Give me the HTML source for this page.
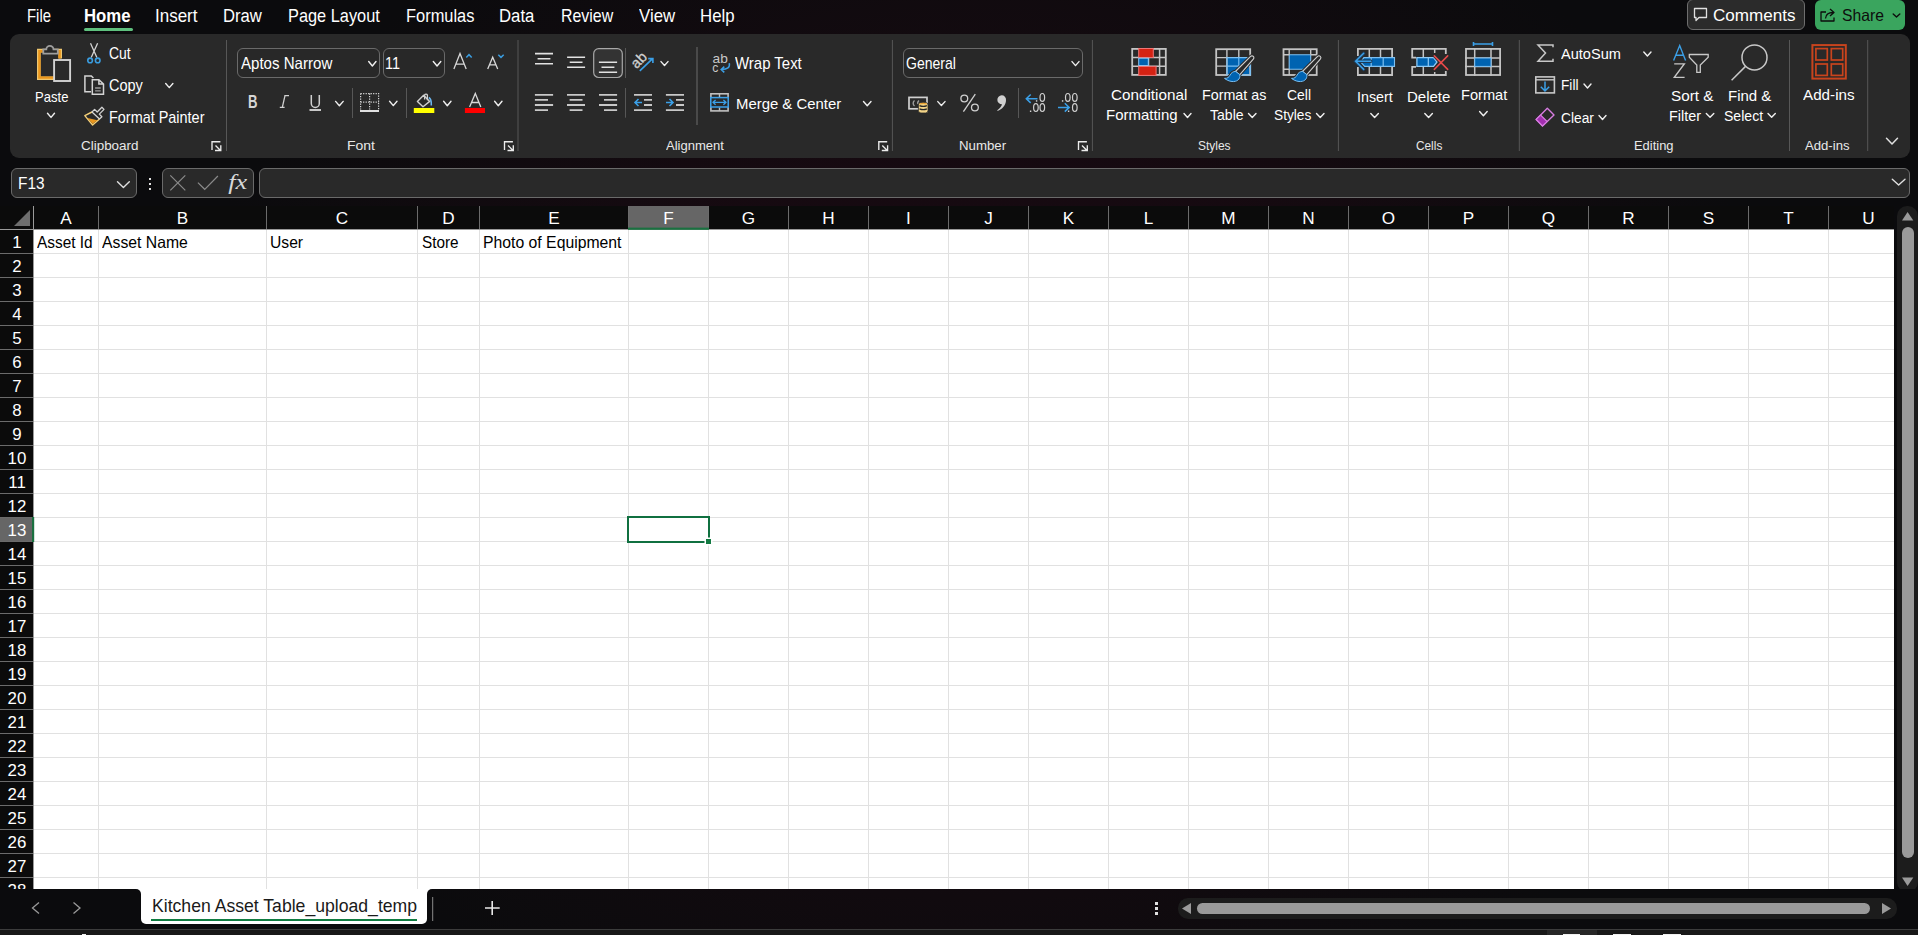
<!DOCTYPE html>
<html><head><meta charset="utf-8"><style>
html,body{margin:0;padding:0;width:1918px;height:935px;overflow:hidden;background:#0b0b0d;}
body{position:relative;font-family:"Liberation Sans",sans-serif;
background:var(--bgd);}
:root{--bgd:radial-gradient(ellipse 820px 620px at 980px 450px, #170a11 0%, rgba(23,10,17,0.9) 50%, rgba(11,11,13,0) 100%) fixed, #0b0b0d;}
.t{position:absolute;white-space:pre;line-height:1;transform-origin:0 0;}
svg{position:absolute;left:0;top:0;}
</style></head><body>
<div style="position:absolute;left:84px;top:28px;width:49px;height:2.6px;background:#5fc07e;border-radius:2px;"></div><div style="position:absolute;left:1687px;top:-1px;width:118px;height:31px;background:#2b2b2b;border:1px solid #6e6e6e;border-radius:6px;box-sizing:border-box;"></div><div style="position:absolute;left:1815px;top:0px;width:90px;height:29.5px;background:#3aa55e;border-radius:6px;"></div><div style="position:absolute;left:10px;top:34px;width:1900px;height:123.5px;background:#292929;border-radius:9px;"></div><div style="position:absolute;left:237px;top:48px;width:142.5px;height:29.5px;background:#282828;border:1px solid #6a6a6a;border-radius:6px;box-sizing:border-box;"></div><div style="position:absolute;left:382.5px;top:48px;width:62px;height:29.5px;background:#282828;border:1px solid #6a6a6a;border-radius:6px;box-sizing:border-box;"></div><div style="position:absolute;left:903px;top:48px;width:180px;height:30px;background:#282828;border:1px solid #6a6a6a;border-radius:6px;box-sizing:border-box;"></div><div style="position:absolute;left:11px;top:168px;width:125.5px;height:30px;background:#292929;border:1px solid #6a6a6a;border-radius:6px;box-sizing:border-box;"></div><div style="position:absolute;left:148.5px;top:177.5px;width:2.5px;height:2.5px;background:#e0e0e0;"></div><div style="position:absolute;left:148.5px;top:182.5px;width:2.5px;height:2.5px;background:#e0e0e0;"></div><div style="position:absolute;left:148.5px;top:187.5px;width:2.5px;height:2.5px;background:#e0e0e0;"></div><div style="position:absolute;left:162px;top:168px;width:91.5px;height:30px;background:#292929;border:1px solid #6a6a6a;border-radius:6px;box-sizing:border-box;"></div><div style="position:absolute;left:259px;top:168px;width:1651px;height:30px;background:#292929;border:1px solid #6a6a6a;border-radius:6px;box-sizing:border-box;"></div><div style="position:absolute;left:0px;top:206px;width:1894px;height:683px;background:#0b0b0b;"></div><div style="position:absolute;left:34px;top:230px;width:1860px;height:659px;background:#ffffff;"></div><div style="position:absolute;left:628px;top:206px;width:81px;height:23px;background:#666666;"></div><div style="position:absolute;left:0px;top:517px;width:33px;height:25px;background:#666666;"></div><div style="position:absolute;left:1897px;top:206px;width:21px;height:686px;background:#1c1c1c;border-radius:10px;"></div><div style="position:absolute;left:1902px;top:227px;width:11.5px;height:631px;background:#9a9a9a;border-radius:6px;"></div><div style="position:absolute;left:0px;top:889px;width:1918px;height:40px;background:var(--bgd);background-attachment:fixed;"></div><div style="position:absolute;left:130px;top:884px;width:310px;height:12px;background:#ffffff;"></div><div style="position:absolute;left:0px;top:889px;width:141px;height:40px;background:var(--bgd);background-attachment:fixed;border-top-right-radius:5px;"></div><div style="position:absolute;left:427px;top:889px;width:1491px;height:40px;background:var(--bgd);background-attachment:fixed;border-top-left-radius:5px;"></div><div style="position:absolute;left:141px;top:885px;width:286px;height:39px;background:#ffffff;border-radius:0 0 5px 5px;"></div><div style="position:absolute;left:151px;top:918.9px;width:266px;height:2.2px;background:#107c41;"></div><div style="position:absolute;left:1155px;top:902px;width:2.5px;height:2.5px;background:#e0e0e0;"></div><div style="position:absolute;left:1155px;top:907px;width:2.5px;height:2.5px;background:#e0e0e0;"></div><div style="position:absolute;left:1155px;top:912px;width:2.5px;height:2.5px;background:#e0e0e0;"></div><div style="position:absolute;left:1178px;top:898px;width:719px;height:20.5px;background:#1c1c1c;border-radius:10px;"></div><div style="position:absolute;left:1197px;top:903px;width:673px;height:11px;background:#9a9a9a;border-radius:6px;"></div><div style="position:absolute;left:0px;top:929px;width:1918px;height:6px;background:#181818;border-top:1px solid #3c3c3c;box-sizing:border-box;"></div><div style="position:absolute;left:1547px;top:930px;width:50px;height:5px;background:#262626;"></div><div style="position:absolute;left:1562.8px;top:933.6px;width:17.200000000000045px;height:1.4px;background:#f0f0f0;"></div><div style="position:absolute;left:1612.8px;top:933.6px;width:18.200000000000045px;height:1.4px;background:#f0f0f0;"></div><div style="position:absolute;left:1662.9px;top:933.6px;width:18.09999999999991px;height:1.4px;background:#f0f0f0;"></div><div style="position:absolute;left:82px;top:933.5px;width:4px;height:1.5px;background:#f0f0f0;"></div>
<svg width="1918" height="935" viewBox="0 0 1918 935"><line x1="226.5" y1="40" x2="226.5" y2="151" stroke="#575757" stroke-width="1"/><line x1="518" y1="40" x2="518" y2="151" stroke="#575757" stroke-width="1"/><line x1="697" y1="47" x2="697" y2="125" stroke="#575757" stroke-width="1"/><line x1="892.4" y1="40" x2="892.4" y2="151" stroke="#575757" stroke-width="1"/><line x1="1092.4" y1="40" x2="1092.4" y2="151" stroke="#575757" stroke-width="1"/><line x1="1338.4" y1="40" x2="1338.4" y2="151" stroke="#575757" stroke-width="1"/><line x1="1519.3" y1="40" x2="1519.3" y2="151" stroke="#575757" stroke-width="1"/><line x1="1789.5" y1="40" x2="1789.5" y2="151" stroke="#575757" stroke-width="1"/><line x1="1867.7" y1="40" x2="1867.7" y2="151" stroke="#575757" stroke-width="1"/><g stroke="#ececec" fill="none" stroke-width="1.35"><path d="M212.0 150 V141.7 H220.4"/><path d="M215.5 145.4 L220.5 150.4 M215.0 150.5 H220.8 V145.2"/></g><g stroke="#ececec" fill="none" stroke-width="1.35"><path d="M504.5 150 V141.7 H512.9"/><path d="M508 145.4 L513 150.4 M507.5 150.5 H513.3 V145.2"/></g><g stroke="#ececec" fill="none" stroke-width="1.35"><path d="M878.8 150 V141.7 H887.1999999999999"/><path d="M882.3 145.4 L887.3 150.4 M881.8 150.5 H887.5999999999999 V145.2"/></g><g stroke="#ececec" fill="none" stroke-width="1.35"><path d="M1078.5 150 V141.7 H1086.9"/><path d="M1082 145.4 L1087 150.4 M1081.5 150.5 H1087.3 V145.2"/></g><line x1="98.5" y1="230" x2="98.5" y2="889" stroke="#e1e1e1"/><line x1="98.5" y1="206" x2="98.5" y2="229" stroke="#6b6b6b"/><line x1="266.5" y1="230" x2="266.5" y2="889" stroke="#e1e1e1"/><line x1="266.5" y1="206" x2="266.5" y2="229" stroke="#6b6b6b"/><line x1="417.5" y1="230" x2="417.5" y2="889" stroke="#e1e1e1"/><line x1="417.5" y1="206" x2="417.5" y2="229" stroke="#6b6b6b"/><line x1="479.5" y1="230" x2="479.5" y2="889" stroke="#e1e1e1"/><line x1="479.5" y1="206" x2="479.5" y2="229" stroke="#6b6b6b"/><line x1="628.5" y1="230" x2="628.5" y2="889" stroke="#e1e1e1"/><line x1="628.5" y1="206" x2="628.5" y2="229" stroke="#6b6b6b"/><line x1="708.5" y1="230" x2="708.5" y2="889" stroke="#e1e1e1"/><line x1="708.5" y1="206" x2="708.5" y2="229" stroke="#6b6b6b"/><line x1="788.5" y1="230" x2="788.5" y2="889" stroke="#e1e1e1"/><line x1="788.5" y1="206" x2="788.5" y2="229" stroke="#6b6b6b"/><line x1="868.5" y1="230" x2="868.5" y2="889" stroke="#e1e1e1"/><line x1="868.5" y1="206" x2="868.5" y2="229" stroke="#6b6b6b"/><line x1="948.5" y1="230" x2="948.5" y2="889" stroke="#e1e1e1"/><line x1="948.5" y1="206" x2="948.5" y2="229" stroke="#6b6b6b"/><line x1="1028.5" y1="230" x2="1028.5" y2="889" stroke="#e1e1e1"/><line x1="1028.5" y1="206" x2="1028.5" y2="229" stroke="#6b6b6b"/><line x1="1108.5" y1="230" x2="1108.5" y2="889" stroke="#e1e1e1"/><line x1="1108.5" y1="206" x2="1108.5" y2="229" stroke="#6b6b6b"/><line x1="1188.5" y1="230" x2="1188.5" y2="889" stroke="#e1e1e1"/><line x1="1188.5" y1="206" x2="1188.5" y2="229" stroke="#6b6b6b"/><line x1="1268.5" y1="230" x2="1268.5" y2="889" stroke="#e1e1e1"/><line x1="1268.5" y1="206" x2="1268.5" y2="229" stroke="#6b6b6b"/><line x1="1348.5" y1="230" x2="1348.5" y2="889" stroke="#e1e1e1"/><line x1="1348.5" y1="206" x2="1348.5" y2="229" stroke="#6b6b6b"/><line x1="1428.5" y1="230" x2="1428.5" y2="889" stroke="#e1e1e1"/><line x1="1428.5" y1="206" x2="1428.5" y2="229" stroke="#6b6b6b"/><line x1="1508.5" y1="230" x2="1508.5" y2="889" stroke="#e1e1e1"/><line x1="1508.5" y1="206" x2="1508.5" y2="229" stroke="#6b6b6b"/><line x1="1588.5" y1="230" x2="1588.5" y2="889" stroke="#e1e1e1"/><line x1="1588.5" y1="206" x2="1588.5" y2="229" stroke="#6b6b6b"/><line x1="1668.5" y1="230" x2="1668.5" y2="889" stroke="#e1e1e1"/><line x1="1668.5" y1="206" x2="1668.5" y2="229" stroke="#6b6b6b"/><line x1="1748.5" y1="230" x2="1748.5" y2="889" stroke="#e1e1e1"/><line x1="1748.5" y1="206" x2="1748.5" y2="229" stroke="#6b6b6b"/><line x1="1828.5" y1="230" x2="1828.5" y2="889" stroke="#e1e1e1"/><line x1="1828.5" y1="206" x2="1828.5" y2="229" stroke="#6b6b6b"/><line x1="34" y1="253.5" x2="1894" y2="253.5" stroke="#e1e1e1"/><line x1="0" y1="253.5" x2="33" y2="253.5" stroke="#6b6b6b"/><line x1="34" y1="277.5" x2="1894" y2="277.5" stroke="#e1e1e1"/><line x1="0" y1="277.5" x2="33" y2="277.5" stroke="#6b6b6b"/><line x1="34" y1="301.5" x2="1894" y2="301.5" stroke="#e1e1e1"/><line x1="0" y1="301.5" x2="33" y2="301.5" stroke="#6b6b6b"/><line x1="34" y1="325.5" x2="1894" y2="325.5" stroke="#e1e1e1"/><line x1="0" y1="325.5" x2="33" y2="325.5" stroke="#6b6b6b"/><line x1="34" y1="349.5" x2="1894" y2="349.5" stroke="#e1e1e1"/><line x1="0" y1="349.5" x2="33" y2="349.5" stroke="#6b6b6b"/><line x1="34" y1="373.5" x2="1894" y2="373.5" stroke="#e1e1e1"/><line x1="0" y1="373.5" x2="33" y2="373.5" stroke="#6b6b6b"/><line x1="34" y1="397.5" x2="1894" y2="397.5" stroke="#e1e1e1"/><line x1="0" y1="397.5" x2="33" y2="397.5" stroke="#6b6b6b"/><line x1="34" y1="421.5" x2="1894" y2="421.5" stroke="#e1e1e1"/><line x1="0" y1="421.5" x2="33" y2="421.5" stroke="#6b6b6b"/><line x1="34" y1="445.5" x2="1894" y2="445.5" stroke="#e1e1e1"/><line x1="0" y1="445.5" x2="33" y2="445.5" stroke="#6b6b6b"/><line x1="34" y1="469.5" x2="1894" y2="469.5" stroke="#e1e1e1"/><line x1="0" y1="469.5" x2="33" y2="469.5" stroke="#6b6b6b"/><line x1="34" y1="493.5" x2="1894" y2="493.5" stroke="#e1e1e1"/><line x1="0" y1="493.5" x2="33" y2="493.5" stroke="#6b6b6b"/><line x1="34" y1="517.5" x2="1894" y2="517.5" stroke="#e1e1e1"/><line x1="0" y1="517.5" x2="33" y2="517.5" stroke="#6b6b6b"/><line x1="34" y1="541.5" x2="1894" y2="541.5" stroke="#e1e1e1"/><line x1="0" y1="541.5" x2="33" y2="541.5" stroke="#6b6b6b"/><line x1="34" y1="565.5" x2="1894" y2="565.5" stroke="#e1e1e1"/><line x1="0" y1="565.5" x2="33" y2="565.5" stroke="#6b6b6b"/><line x1="34" y1="589.5" x2="1894" y2="589.5" stroke="#e1e1e1"/><line x1="0" y1="589.5" x2="33" y2="589.5" stroke="#6b6b6b"/><line x1="34" y1="613.5" x2="1894" y2="613.5" stroke="#e1e1e1"/><line x1="0" y1="613.5" x2="33" y2="613.5" stroke="#6b6b6b"/><line x1="34" y1="637.5" x2="1894" y2="637.5" stroke="#e1e1e1"/><line x1="0" y1="637.5" x2="33" y2="637.5" stroke="#6b6b6b"/><line x1="34" y1="661.5" x2="1894" y2="661.5" stroke="#e1e1e1"/><line x1="0" y1="661.5" x2="33" y2="661.5" stroke="#6b6b6b"/><line x1="34" y1="685.5" x2="1894" y2="685.5" stroke="#e1e1e1"/><line x1="0" y1="685.5" x2="33" y2="685.5" stroke="#6b6b6b"/><line x1="34" y1="709.5" x2="1894" y2="709.5" stroke="#e1e1e1"/><line x1="0" y1="709.5" x2="33" y2="709.5" stroke="#6b6b6b"/><line x1="34" y1="733.5" x2="1894" y2="733.5" stroke="#e1e1e1"/><line x1="0" y1="733.5" x2="33" y2="733.5" stroke="#6b6b6b"/><line x1="34" y1="757.5" x2="1894" y2="757.5" stroke="#e1e1e1"/><line x1="0" y1="757.5" x2="33" y2="757.5" stroke="#6b6b6b"/><line x1="34" y1="781.5" x2="1894" y2="781.5" stroke="#e1e1e1"/><line x1="0" y1="781.5" x2="33" y2="781.5" stroke="#6b6b6b"/><line x1="34" y1="805.5" x2="1894" y2="805.5" stroke="#e1e1e1"/><line x1="0" y1="805.5" x2="33" y2="805.5" stroke="#6b6b6b"/><line x1="34" y1="829.5" x2="1894" y2="829.5" stroke="#e1e1e1"/><line x1="0" y1="829.5" x2="33" y2="829.5" stroke="#6b6b6b"/><line x1="34" y1="853.5" x2="1894" y2="853.5" stroke="#e1e1e1"/><line x1="0" y1="853.5" x2="33" y2="853.5" stroke="#6b6b6b"/><line x1="34" y1="877.5" x2="1894" y2="877.5" stroke="#e1e1e1"/><line x1="0" y1="877.5" x2="33" y2="877.5" stroke="#6b6b6b"/><line x1="0" y1="229.5" x2="1894" y2="229.5" stroke="#9a9a9a"/><line x1="33.5" y1="206" x2="33.5" y2="889" stroke="#9a9a9a"/><rect x="628" y="227.6" width="81" height="2.2" fill="#1a7040"/><rect x="32" y="517" width="2.2" height="25" fill="#1a7040"/><path d="M14 226 L30 210 L30 226 Z" fill="#6e6e6e"/><rect x="628" y="517" width="81" height="25" fill="none" stroke="#107040" stroke-width="2"/><rect x="704.5" y="537.5" width="8" height="8" fill="#ffffff"/><rect x="706" y="539" width="5" height="5" fill="#137a42"/><path d="M1902 220.5 L1913.3 220.5 L1907.6 212 Z" fill="#9a9a9a"/><path d="M1902 877.5 L1913.3 877.5 L1907.6 886 Z" fill="#9a9a9a"/><path d="M39 902.5 L32.5 908 L39 913.5" fill="none" stroke="#9a9a9a" stroke-width="1.3"/><path d="M73.5 902.5 L80 908 L73.5 913.5" fill="none" stroke="#9a9a9a" stroke-width="1.3"/><line x1="432.7" y1="897" x2="432.7" y2="921" stroke="#8a8a8a" stroke-width="1"/><path d="M492.2 901 V915 M485 908 H499.7" stroke="#e8e8e8" stroke-width="1.6"/><path d="M1191 903 L1191 914 L1182 908.5 Z" fill="#9a9a9a"/><path d="M1882 903 L1882 914 L1891 908.5 Z" fill="#9a9a9a"/><path d="M60.2 58.5 V50.6 H38.8 V78.2 H54" fill="none" stroke="#f0c870" stroke-width="3.6"/><path d="M59.6 58.5 V51.2 H39.4 V77.6 H54" fill="none" stroke="#ea961c" stroke-width="2.4"/><path d="M43.3 53.6 V49.4 H46.3 A3.6 3.6 0 0 1 53.5 49.4 H57.8 V53.6 Z" fill="#292929" stroke="#9e9e9e" stroke-width="1.8"/><rect x="54.1" y="60" width="16" height="21" fill="#292929" stroke="#d2d2d2" stroke-width="1.9"/><path d="M47.5 113.2 L51.0 117.4 L54.5 113.2" fill="none" stroke="#f0f0f0" stroke-width="1.4" stroke-linecap="round" stroke-linejoin="round"/><path d="M90.5 43.3 L96.9 57.6 M97.6 43.3 L91.2 57.6" stroke="#d4d4d4" stroke-width="1.3" fill="none"/><circle cx="90.1" cy="60.4" r="2.3" fill="none" stroke="#3a9de0" stroke-width="1.6"/><circle cx="97.7" cy="60.4" r="2.3" fill="none" stroke="#3a9de0" stroke-width="1.6"/><path d="M91 91.8 H84.9 V75.9 H91.3 L93.4 78" fill="none" stroke="#d4d4d4" stroke-width="1.5"/><path d="M92.3 79.8 H98.9 L103.5 84 V94.3 H92.3 Z M98.9 79.8 V84 H103.5" fill="#292929" stroke="#d4d4d4" stroke-width="1.5"/><path d="M95.1 88 H100.7 M95.1 90.8 H100.7" stroke="#9c9c9c" stroke-width="1.3"/><path d="M165.7 83.5 L169.3 87.6 L172.9 83.5" fill="none" stroke="#f0f0f0" stroke-width="1.4" stroke-linecap="round" stroke-linejoin="round"/><path d="M92 112 L84.8 115.6 L92.6 125 L99.5 118.9" fill="none" stroke="#f3cf78" stroke-width="1.4" stroke-linejoin="round"/><path d="M87.5 118 L97.5 120.3 L92.6 123.8 Z" fill="#e8961e"/><path d="M92 112 L94.6 109.4 L97.2 112 L101.9 107.3 L104 109.4 L99.3 114.1 L101.9 116.7 L99.5 118.9 Z" fill="none" stroke="#d4d4d4" stroke-width="1.3" stroke-linejoin="round"/><path d="M368.7 61.5 L372.35 66 L376 61.5" fill="none" stroke="#f0f0f0" stroke-width="1.4" stroke-linecap="round" stroke-linejoin="round"/><path d="M433.3 61.5 L437.05 66 L440.8 61.5" fill="none" stroke="#f0f0f0" stroke-width="1.4" stroke-linecap="round" stroke-linejoin="round"/><path d="M453.9 68.9 L460 53.6 L466.2 68.9 M456 64.2 H464" fill="none" stroke="#d8d8d8" stroke-width="1.3"/><path d="M466.3 57.5 L469 54.7 L471.7 57.5" fill="none" stroke="#3a9de0" stroke-width="1.5"/><path d="M487.7 69 L492.7 57.2 L497.7 69 M489.4 64.8 H496" fill="none" stroke="#d8d8d8" stroke-width="1.3"/><path d="M498.3 54.7 L501 57.4 L503.7 54.7" fill="none" stroke="#3a9de0" stroke-width="1.5"/><path d="M284.3 95.6 H289 M285 95.6 L282.3 107.4 M279.8 107.4 H284.6" fill="none" stroke="#d0d0d0" stroke-width="1.3"/><path d="M311.3 95 V103.4 A4 4 0 0 0 319.3 103.4 V95" fill="none" stroke="#d0d0d0" stroke-width="1.5"/><rect x="309.5" y="109" width="11.5" height="2" fill="#c8c8c8"/><path d="M335.6 101.4 L339.4 105.8 L343.2 101.4" fill="none" stroke="#f0f0f0" stroke-width="1.4" stroke-linecap="round" stroke-linejoin="round"/><line x1="352.5" y1="88" x2="352.5" y2="118" stroke="#575757"/><g fill="none" stroke="#d8d8d8" stroke-width="1.2" stroke-dasharray="1.2 1.3"><path d="M360.6 93.6 H378.6 V109.4 M360.6 93.6 V109.4 M369.6 93.6 V109.4 M360.6 102.1 H378.6"/></g><rect x="360" y="110" width="19" height="2" fill="#e0e0e0"/><path d="M389.6 101.3 L393.3 105.6 L397 101.3" fill="none" stroke="#f0f0f0" stroke-width="1.4" stroke-linecap="round" stroke-linejoin="round"/><line x1="406.5" y1="88" x2="406.5" y2="118" stroke="#575757"/><path d="M424.6 99.5 V95 A1.5 1.5 0 0 1 427.4 95 V100.3" fill="none" stroke="#d0d0d0" stroke-width="1.3"/><path d="M417.4 101.5 L423.6 95.3 L429.7 101.4 L423 106.7 Z" fill="none" stroke="#d0d0d0" stroke-width="1.4" stroke-linejoin="round"/><path d="M428.8 97.5 Q431.6 99 431.3 105.5" fill="none" stroke="#6bb6ee" stroke-width="1.6"/><rect x="413.8" y="108" width="20.5" height="5" fill="#ffff00"/><path d="M443.6 101.3 L447.3 105.8 L451 101.3" fill="none" stroke="#f0f0f0" stroke-width="1.4" stroke-linecap="round" stroke-linejoin="round"/><path d="M469.6 107 L475.3 93.4 L480.8 107 M471.6 102.5 H479" fill="none" stroke="#d8d8d8" stroke-width="1.3"/><rect x="464.9" y="108" width="20.1" height="5" fill="#ff0000"/><path d="M494.6 101.3 L498.3 105.8 L502 101.3" fill="none" stroke="#f0f0f0" stroke-width="1.4" stroke-linecap="round" stroke-linejoin="round"/><rect x="593.7" y="48.7" width="28.6" height="28.8" rx="5" fill="#333333" stroke="#a8a8a8" stroke-width="1.2"/><path d="M535 53.6 H553 M537.6 58.7 H550.4 M535 63.7 H553" stroke="#e2e2e2" stroke-width="1.6"/><path d="M567.1 57.2 H585.1 M569.7 62.2 H582.5 M567.1 67.2 H585.1" stroke="#e2e2e2" stroke-width="1.6"/><path d="M598.9 62.2 H617.1 M601.5 67.3 H614.4 M598.9 72.3 H617.1" stroke="#e2e2e2" stroke-width="1.6"/><line x1="625.5" y1="48" x2="625.5" y2="78" stroke="#575757"/><g transform="translate(639.2,60.4) rotate(-45)"><text x="-8.2" y="4.4" font-family="Liberation Sans" font-size="14.5" fill="#d0d0d0" stroke="#d0d0d0" stroke-width="0.3">ab</text></g><path d="M639.8 70.9 L652.6 58.6 M648.2 58.6 H652.9 V63" fill="none" stroke="#3ba0e8" stroke-width="1.6"/><path d="M661 61.6 L664.5 65.5 L668 61.6" fill="none" stroke="#f0f0f0" stroke-width="1.4" stroke-linecap="round" stroke-linejoin="round"/><line x1="697" y1="47" x2="697" y2="125" stroke="#575757"/><path d="M534.9 94.9 H553.1 M534.9 99.9 H548 M534.9 105 H553.1 M534.9 110.1 H548" stroke="#c8c8c8" stroke-width="1.8"/><path d="M567 94.9 H585 M569.6 99.9 H582.5 M567 105 H585 M569.6 110.1 H582.5" stroke="#c8c8c8" stroke-width="1.8"/><path d="M599 94.9 H617.1 M604 99.9 H617.1 M599 105 H617.1 M604 110.1 H617.1" stroke="#c8c8c8" stroke-width="1.8"/><line x1="625.5" y1="88" x2="625.5" y2="117.7" stroke="#575757"/><path d="M634 94.9 H652 M644 99.9 H652 M644 105 H652 M634 110.1 H652" stroke="#c8c8c8" stroke-width="1.8"/><path d="M642 102.5 H635 M638.5 99 L635 102.5 L638.5 106" fill="none" stroke="#3ba0e8" stroke-width="1.6"/><path d="M665.9 94.9 H684 M676 99.9 H684 M676 105 H684 M665.9 110.1 H684" stroke="#c8c8c8" stroke-width="1.8"/><path d="M666 102.5 H673 M669.5 99 L673 102.5 L669.5 106" fill="none" stroke="#3ba0e8" stroke-width="1.6"/><text x="712.5" y="62.6" font-family="Liberation Sans" font-size="12.2" fill="#c8c8c8" textLength="15.3" lengthAdjust="spacingAndGlyphs">ab</text><text x="712.3" y="71.8" font-family="Liberation Sans" font-size="12.2" fill="#c8c8c8">c</text><path d="M729.3 63.2 Q730.5 69.5 721.5 69.5 M724.3 66.6 L721.2 69.5 L724.3 72.4" fill="none" stroke="#3ba0e8" stroke-width="1.5"/><rect x="710.9" y="93.8" width="17.2" height="17.1" fill="none" stroke="#c0c0c0" stroke-width="1.6"/><path d="M719.5 93.8 V97 M719.5 107.6 V110.9" stroke="#c0c0c0" stroke-width="1.4"/><rect x="710.8" y="97.6" width="17.4" height="9.4" fill="#292929" stroke="#3ba0e8" stroke-width="1.5"/><path d="M713 102.3 H726 M715.6 99.9 L713 102.3 L715.6 104.7 M723.4 99.9 L726 102.3 L723.4 104.7" fill="none" stroke="#3ba0e8" stroke-width="1.3"/><path d="M863.5 101.5 L867.25 105.8 L871 101.5" fill="none" stroke="#f0f0f0" stroke-width="1.4" stroke-linecap="round" stroke-linejoin="round"/><path d="M1072 61.6 L1075.5 65.6 L1079 61.6" fill="none" stroke="#f0f0f0" stroke-width="1.4" stroke-linecap="round" stroke-linejoin="round"/><rect x="909" y="97.4" width="18" height="11.4" fill="none" stroke="#d0d0d0" stroke-width="1.7"/><path d="M914.5 100.5 A3.5 3.5 0 0 0 914.5 106 M919 100.5 A3 3 0 0 0 918 104" fill="none" stroke="#a0a0a0" stroke-width="1.4"/><rect x="918.4" y="102.4" width="9.6" height="10.6" rx="2.6" fill="#f3d487" stroke="#292929" stroke-width="0.8"/><path d="M919.5 105.6 Q923.2 107.2 926.9 105.6 M919.5 108.9 Q923.2 110.5 926.9 108.9" fill="none" stroke="#292929" stroke-width="1.2"/><path d="M919.6 104 Q923.2 102.6 926.8 104" fill="none" stroke="#e8a030" stroke-width="1.2"/><path d="M937.8 101.6 L941.4 105.5 L945 101.6" fill="none" stroke="#f0f0f0" stroke-width="1.4" stroke-linecap="round" stroke-linejoin="round"/><circle cx="964.3" cy="98.5" r="3.4" fill="none" stroke="#d0d0d0" stroke-width="1.3"/><circle cx="974.9" cy="107.5" r="3.4" fill="none" stroke="#d0d0d0" stroke-width="1.3"/><path d="M975.3 94.2 L963.4 111.6" stroke="#d0d0d0" stroke-width="1.3"/><path d="M1001.7 95.3 A4.3 4.3 0 0 1 1006 100 C1006.2 105 1002 109.5 997.5 111 L997.3 110.2 C1000 108.3 1001.5 106.5 1002 104.3 A4.3 4.3 0 0 1 1001.7 95.3 Z" fill="#d0d0d0"/><line x1="1018.5" y1="88" x2="1018.5" y2="118" stroke="#575757"/><ellipse cx="1042.3" cy="97.4" rx="2.3" ry="3.9" fill="none" stroke="#d0d0d0" stroke-width="1.2"/><rect x="1035.8999999999999" y="100.2" width="1.4" height="1.5" fill="#d0d0d0"/><ellipse cx="1035.9" cy="107.6" rx="2.3" ry="3.9" fill="none" stroke="#d0d0d0" stroke-width="1.2"/><ellipse cx="1042.3" cy="107.6" rx="2.3" ry="3.9" fill="none" stroke="#d0d0d0" stroke-width="1.2"/><rect x="1029.8999999999999" y="110.5" width="1.4" height="1.5" fill="#d0d0d0"/><path d="M1037.5 98.7 H1026.5 M1030.7 94.5 L1026.3 98.7 L1030.7 102.9" fill="none" stroke="#3ba0e8" stroke-width="1.5"/><ellipse cx="1067.8" cy="97.4" rx="2.3" ry="3.9" fill="none" stroke="#d0d0d0" stroke-width="1.2"/><ellipse cx="1074.8" cy="97.4" rx="2.3" ry="3.9" fill="none" stroke="#d0d0d0" stroke-width="1.2"/><rect x="1061.8999999999999" y="100.2" width="1.4" height="1.5" fill="#d0d0d0"/><ellipse cx="1074.8" cy="107.6" rx="2.3" ry="3.9" fill="none" stroke="#d0d0d0" stroke-width="1.2"/><rect x="1067.8999999999999" y="110.5" width="1.4" height="1.5" fill="#d0d0d0"/><path d="M1058 107.4 H1069 M1064.8 103.2 L1069.2 107.4 L1064.8 111.6" fill="none" stroke="#3ba0e8" stroke-width="1.5"/><rect x="1132.2" y="48.9" width="33.6" height="26" fill="none" stroke="#c4c4c4" stroke-width="1.8"/><path d="M1159.6 48.9 V74.9 M1132.2 57.6 H1165.8 M1132.2 66.2 H1165.8 M1148.5 48.9 V74.9" stroke="#c4c4c4" stroke-width="1.5"/><rect x="1138.7" y="48.5" width="14.6" height="9" fill="#d42213" stroke="#f07575" stroke-width="1"/><rect x="1138.7" y="58.2" width="9.6" height="7.3" fill="#0063b1" stroke="#8cc8f5" stroke-width="1"/><rect x="1138.7" y="66.4" width="17.4" height="9" fill="#d42213" stroke="#f07575" stroke-width="1"/><path d="M1226.9 57.6 H1251 V75.8 H1226.9 Z" fill="#0063b1"/><rect x="1216.2" y="49.2" width="34" height="25.8" fill="none" stroke="#c4c4c4" stroke-width="1.8"/><path d="M1226.9 49.2 V57.6 M1238.8 49.2 V57.6 M1216.2 57.6 H1226.9 M1216.2 66.1 H1226.9 M1226.9 57.6 V75 " stroke="#c4c4c4" stroke-width="1.4"/><path d="M1226.9 57.6 H1250.5 V75 H1226.9 Z M1238.8 57.6 V75 M1226.9 66.1 H1250.5" fill="none" stroke="#7cc0f2" stroke-width="1.1"/><path d="M1235.4 71.5 L1250.6 56.4 A1.9 1.9 0 0 1 1253.3 59.1 L1239.6 74.9 Z" fill="#292929" stroke="#292929" stroke-width="3"/><path d="M1239.8 74.6 C1240.6 79.5 1236.5 82 1232 81.5 C1229 81.2 1226.3 79.8 1224.5 78.4 C1227.5 78.5 1229 77.2 1230 75.2 C1231 72.8 1233.3 71.4 1235.6 71.4 Z" fill="#292929" stroke="#292929" stroke-width="2.6"/><path d="M1235.4 71.5 L1250.6 56.4 A1.9 1.9 0 0 1 1253.3 59.1 L1239.6 74.9 Z" fill="#292929" stroke="#cfcfcf" stroke-width="1.1" stroke-linejoin="round"/><path d="M1239.8 74.6 C1240.6 79.5 1236.5 82 1232 81.5 C1229 81.2 1226.3 79.8 1224.5 78.4 C1227.5 78.5 1229 77.2 1230 75.2 C1231 72.8 1233.3 71.4 1235.6 71.4 Z" fill="#0063b1" stroke="#78bdf0" stroke-width="1"/><path d="M1289.2 54.8 H1310.7 V69.2 H1289.2 Z" fill="#0063b1" stroke="#7cc0f2" stroke-width="1.1"/><rect x="1283.5" y="49.2" width="33.2" height="25.8" fill="none" stroke="#c4c4c4" stroke-width="1.8"/><path d="M1289.2 49.2 V54.8 M1310.7 49.2 V54.8 M1283.5 54.8 H1289.2 M1310.7 54.8 H1316.7 M1283.5 69.2 H1289.2 M1289.2 69.2 V75" stroke="#c4c4c4" stroke-width="1.4"/><path d="M1302.4 71.5 L1317.6 56.4 A1.9 1.9 0 0 1 1320.3 59.1 L1306.6 74.9 Z" fill="#292929" stroke="#292929" stroke-width="3"/><path d="M1306.8 74.6 C1307.6 79.5 1303.5 82 1299 81.5 C1296 81.2 1293.3 79.8 1291.5 78.4 C1294.5 78.5 1296 77.2 1297 75.2 C1298 72.8 1300.3 71.4 1302.6 71.4 Z" fill="#292929" stroke="#292929" stroke-width="2.6"/><path d="M1302.4 71.5 L1317.6 56.4 A1.9 1.9 0 0 1 1320.3 59.1 L1306.6 74.9 Z" fill="#292929" stroke="#cfcfcf" stroke-width="1.1" stroke-linejoin="round"/><path d="M1306.8 74.6 C1307.6 79.5 1303.5 82 1299 81.5 C1296 81.2 1293.3 79.8 1291.5 78.4 C1294.5 78.5 1296 77.2 1297 75.2 C1298 72.8 1300.3 71.4 1302.6 71.4 Z" fill="#0063b1" stroke="#78bdf0" stroke-width="1"/><path d="M1184 113.5 L1187.5 117.5 L1191 113.5" fill="none" stroke="#f0f0f0" stroke-width="1.4" stroke-linecap="round" stroke-linejoin="round"/><path d="M1248.5 113.5 L1252.25 117.5 L1256 113.5" fill="none" stroke="#f0f0f0" stroke-width="1.4" stroke-linecap="round" stroke-linejoin="round"/><path d="M1316.5 113.5 L1320.25 117.5 L1324 113.5" fill="none" stroke="#f0f0f0" stroke-width="1.4" stroke-linecap="round" stroke-linejoin="round"/><path d="M1357.9 56 V48.9 H1392.1 V75 H1357.9 V67" fill="none" stroke="#c4c4c4" stroke-width="1.8"/><path d="M1369.3 48 V57 M1380.5 48 V57 M1369.3 67 V75.9 M1380.5 67 V75.9" stroke="#c4c4c4" stroke-width="1.5"/><path d="M1363.9 57.6 H1394.5 V66.4 H1364.7 L1360.7 62 Z" fill="#0063b1" stroke="#7cc0f2" stroke-width="1.1"/><path d="M1371.2 57.6 V66.4 M1383.2 57.6 V66.4" stroke="#7cc0f2" stroke-width="1.2"/><path d="M1363.7 53.2 L1355.6 61.3 L1363.7 69.4 M1356 61.3 H1370.8" fill="none" stroke="#1d3a56" stroke-width="3.4" stroke-linecap="round"/><path d="M1363.7 53.2 L1355.6 61.3 L1363.7 69.4 M1356 61.3 H1370.8" fill="none" stroke="#3ba0e8" stroke-width="1.5" stroke-linecap="round"/><path d="M1411.3 57.6 H1416 M1412.2 57.6 V48.9 H1445.8 V54 M1411.3 66.8 H1416 M1412.2 66.8 V75 H1445.8 V71" fill="none" stroke="#c4c4c4" stroke-width="1.8"/><path d="M1423.3 48 V57 M1434.7 48 V53 M1423.3 67 V75.9 M1434.7 72 V75.9" stroke="#c4c4c4" stroke-width="1.5"/><path d="M1416.9 57.7 H1433.6 L1437 62 L1433.6 66.4 H1416.9 Z" fill="#0063b1" stroke="#8fcaf5" stroke-width="1.3"/><path d="M1428.3 57.7 V66.4" stroke="#8fcaf5" stroke-width="1.2"/><path d="M1434.3 55.9 L1447.7 69.4 M1447.7 55.9 L1434.3 69.4" stroke="#292929" stroke-width="3"/><path d="M1434.3 55.9 L1447.7 69.4 M1447.7 55.9 L1434.3 69.4" stroke="#e84a4a" stroke-width="1.5" stroke-linecap="round"/><rect x="1466.0" y="48.9" width="34.100000000000094" height="26.100000000000005" fill="none" stroke="#c4c4c4" stroke-width="1.8"/><path d="M1474.7 48 V75.9 M1491 48 V75.9 M1465.1 58 H1501 M1465.1 66.4 H1501 " stroke="#c4c4c4" stroke-width="1.5"/><rect x="1474.7" y="58" width="16.3" height="8.4" fill="#0063b1" stroke="#7cc0f2" stroke-width="1"/><path d="M1473.5 44 H1492.5 M1473.5 42 V46 M1492.5 42 V46" stroke="#3ba0e8" stroke-width="1.6"/><path d="M1370.8 113.4 L1374.6 117.5 L1378.4 113.4" fill="none" stroke="#f0f0f0" stroke-width="1.4" stroke-linecap="round" stroke-linejoin="round"/><path d="M1424.8 113.4 L1428.6 117.5 L1432.4 113.4" fill="none" stroke="#f0f0f0" stroke-width="1.4" stroke-linecap="round" stroke-linejoin="round"/><path d="M1479.6 111.6 L1483.4 115.7 L1487.2 111.6" fill="none" stroke="#f0f0f0" stroke-width="1.4" stroke-linecap="round" stroke-linejoin="round"/><path d="M1553 47.2 V45 H1538 L1545.5 53 L1538 61.2 H1553 V58.8" fill="none" stroke="#c8c8c8" stroke-width="1.5" stroke-linejoin="miter"/><path d="M1643.8 52 L1647.4 56 L1651 52" fill="none" stroke="#f0f0f0" stroke-width="1.4" stroke-linecap="round" stroke-linejoin="round"/><rect x="1535.8" y="76.9" width="18.6" height="16" fill="none" stroke="#c8c8c8" stroke-width="1.6"/><path d="M1535.8 79.8 H1554.4" stroke="#c8c8c8" stroke-width="1.4"/><path d="M1545 81.5 V91 M1540.8 86.8 L1545 91 L1549.2 86.8" fill="none" stroke="#3ba0e8" stroke-width="1.5"/><path d="M1584 84 L1587.5 88 L1591 84" fill="none" stroke="#f0f0f0" stroke-width="1.4" stroke-linecap="round" stroke-linejoin="round"/><path d="M1536.2 119.4 L1547.3 108.3 L1554 115 L1542.5 126 Z" fill="none" stroke="#d77ce0" stroke-width="1.4" stroke-linejoin="round"/><path d="M1536.2 119.4 L1540.6 115 L1547.1 121.6 L1542.5 126 Z" fill="#a22eb0" stroke="#d77ce0" stroke-width="1.2"/><path d="M1599 115.5 L1602.5 119.5 L1606 115.5" fill="none" stroke="#f0f0f0" stroke-width="1.4" stroke-linecap="round" stroke-linejoin="round"/><path d="M1673.6 60.5 L1679.7 45.6 L1685.6 60.5 M1675.6 55.3 H1683.6" fill="none" stroke="#3ba0e8" stroke-width="1.4"/><path d="M1674.2 63.9 H1684.3 L1674.3 77.4 H1684.6" fill="none" stroke="#c8c8c8" stroke-width="1.4"/><path d="M1689.3 54.5 H1708.2 V57.3 L1700.3 65 V72.4 H1696.8 V65 L1689.3 57.3 Z" fill="none" stroke="#c8c8c8" stroke-width="1.3" stroke-linejoin="miter"/><circle cx="1754.5" cy="57.4" r="12.5" fill="none" stroke="#c8c8c8" stroke-width="1.5"/><path d="M1745.5 66.4 L1731.6 80.2" stroke="#c8c8c8" stroke-width="1.5"/><path d="M1706.3 113.5 L1710.05 117.3 L1713.8 113.5" fill="none" stroke="#f0f0f0" stroke-width="1.4" stroke-linecap="round" stroke-linejoin="round"/><path d="M1768 113.5 L1771.65 117.3 L1775.3 113.5" fill="none" stroke="#f0f0f0" stroke-width="1.4" stroke-linecap="round" stroke-linejoin="round"/><rect x="1812.4" y="45.1" width="33.4" height="33.5" fill="none" stroke="#c9441d" stroke-width="2"/><rect x="1815.9" y="48.6" width="11.4" height="11.4" fill="none" stroke="#c9441d" stroke-width="1.7"/><rect x="1831.3" y="48.6" width="11.4" height="11.4" fill="none" stroke="#c9441d" stroke-width="1.7"/><rect x="1815.9" y="64" width="11.4" height="11.4" fill="none" stroke="#c9441d" stroke-width="1.7"/><rect x="1831.3" y="64" width="11.4" height="11.4" fill="none" stroke="#c9441d" stroke-width="1.7"/><path d="M1886.5 138.2 L1892.0 144 L1897.5 138.2" fill="none" stroke="#e0e0e0" stroke-width="1.5" stroke-linecap="round" stroke-linejoin="round"/><path d="M117.5 181.8 L123.4 187.6 L129.3 181.8" fill="none" stroke="#e0e0e0" stroke-width="1.4" stroke-linecap="round" stroke-linejoin="round"/><path d="M170.3 175.3 L185.3 190.3 M185.3 175.3 L170.3 190.3" stroke="#8a8a8a" stroke-width="1.2"/><path d="M197.9 182.6 L204.7 189.3 L217.9 176" fill="none" stroke="#8a8a8a" stroke-width="1.2"/><text x="228.3" y="189.3" font-family="Liberation Serif" font-style="italic" font-size="21.5" fill="#d8d8d8" textLength="19" lengthAdjust="spacingAndGlyphs">fx</text><path d="M1892.3 179.3 L1898.65 185 L1905 179.3" fill="none" stroke="#e0e0e0" stroke-width="1.4" stroke-linecap="round" stroke-linejoin="round"/><path d="M1694.5 8.5 H1706.5 V17.5 H1699 L1696 20.5 V17.5 H1694.5 Z" fill="none" stroke="#e0e0e0" stroke-width="1.3" stroke-linejoin="round"/><path d="M1826 12 H1821 V21 H1834 V17.5 M1825.5 18.5 Q1826 12.5 1833 12.5 M1830 9 L1834 12.5 L1830 16" fill="none" stroke="#0d0d0d" stroke-width="1.3" stroke-linejoin="round"/><path d="M1893.2 14 L1896.5 17 L1899.8 14" fill="none" stroke="#0d0d0d" stroke-width="1.4" stroke-linecap="round" stroke-linejoin="round"/></svg>
<div class="t" style="left:26.70px;top:8.41px;font-size:17.88px;color:#ffffff;transform:scaleX(0.8325)">File</div><div class="t" style="left:84.40px;top:8.41px;font-size:17.88px;color:#ffffff;font-weight:bold;transform:scaleX(0.9385)">Home</div><div class="t" style="left:155.00px;top:8.41px;font-size:17.88px;color:#ffffff;transform:scaleX(0.9509)">Insert</div><div class="t" style="left:223.00px;top:8.41px;font-size:17.88px;color:#ffffff;transform:scaleX(0.9332)">Draw</div><div class="t" style="left:287.50px;top:8.41px;font-size:17.88px;color:#ffffff;transform:scaleX(0.9155)">Page Layout</div><div class="t" style="left:406.25px;top:8.41px;font-size:17.88px;color:#ffffff;transform:scaleX(0.9194)">Formulas</div><div class="t" style="left:499.00px;top:8.41px;font-size:17.88px;color:#ffffff;transform:scaleX(0.9373)">Data</div><div class="t" style="left:560.90px;top:8.41px;font-size:17.88px;color:#ffffff;transform:scaleX(0.8912)">Review</div><div class="t" style="left:638.90px;top:8.41px;font-size:17.88px;color:#ffffff;transform:scaleX(0.9407)">View</div><div class="t" style="left:700.00px;top:8.41px;font-size:17.88px;color:#ffffff;transform:scaleX(0.9406)">Help</div><div class="t" style="left:1713.40px;top:7.90px;font-size:16.72px;color:#ffffff;transform:scaleX(1.0221)">Comments</div><div class="t" style="left:1841.70px;top:7.90px;font-size:16.72px;color:#0d0d0d;transform:scaleX(0.9397)">Share</div><div class="t" style="left:81.00px;top:139.42px;font-size:13.52px;color:#e8e8e8;transform:scaleX(0.9939)">Clipboard</div><div class="t" style="left:347.00px;top:139.42px;font-size:13.52px;color:#e8e8e8;transform:scaleX(1.0357)">Font</div><div class="t" style="left:666.00px;top:139.42px;font-size:13.52px;color:#e8e8e8;transform:scaleX(0.9648)">Alignment</div><div class="t" style="left:958.50px;top:139.42px;font-size:13.52px;color:#e8e8e8;transform:scaleX(0.9794)">Number</div><div class="t" style="left:1198.00px;top:139.42px;font-size:13.52px;color:#e8e8e8;transform:scaleX(0.8858)">Styles</div><div class="t" style="left:1415.50px;top:139.42px;font-size:13.52px;color:#e8e8e8;transform:scaleX(0.8754)">Cells</div><div class="t" style="left:1634.20px;top:139.42px;font-size:13.52px;color:#e8e8e8;transform:scaleX(0.9557)">Editing</div><div class="t" style="left:1805.20px;top:139.42px;font-size:13.52px;color:#e8e8e8;transform:scaleX(0.9711)">Add-ins</div><div class="t" style="left:34.60px;top:88.71px;font-size:15.41px;color:#ffffff;transform:scaleX(0.8476)">Paste</div><div class="t" style="left:109.10px;top:46.01px;font-size:15.70px;color:#ffffff;transform:scaleX(0.8890)">Cut</div><div class="t" style="left:109.10px;top:77.51px;font-size:15.70px;color:#ffffff;transform:scaleX(0.9249)">Copy</div><div class="t" style="left:109.40px;top:109.81px;font-size:15.70px;color:#ffffff;transform:scaleX(0.9200)">Format Painter</div><div class="t" style="left:240.60px;top:54.71px;font-size:16.28px;color:#ffffff;transform:scaleX(0.9265)">Aptos Narrow</div><div class="t" style="left:385.00px;top:54.71px;font-size:16.28px;color:#ffffff;transform:scaleX(0.8881)">11</div><div class="t" style="left:735.20px;top:56.12px;font-size:15.99px;color:#ffffff;transform:scaleX(0.9357)">Wrap Text</div><div class="t" style="left:735.50px;top:95.91px;font-size:15.55px;color:#ffffff;transform:scaleX(0.9581)">Merge &amp; Center</div><div class="t" style="left:906.00px;top:56.31px;font-size:15.99px;color:#ffffff;transform:scaleX(0.8791)">General</div><div class="t" style="left:1111.00px;top:87.00px;font-size:15.55px;color:#ffffff;transform:scaleX(0.9807)">Conditional</div><div class="t" style="left:1106.40px;top:107.00px;font-size:15.55px;color:#ffffff;transform:scaleX(0.9631)">Formatting</div><div class="t" style="left:1201.60px;top:87.00px;font-size:15.55px;color:#ffffff;transform:scaleX(0.9188)">Format as</div><div class="t" style="left:1210.00px;top:107.00px;font-size:15.55px;color:#ffffff;transform:scaleX(0.9040)">Table</div><div class="t" style="left:1287.00px;top:87.00px;font-size:15.55px;color:#ffffff;transform:scaleX(0.8959)">Cell</div><div class="t" style="left:1274.40px;top:107.00px;font-size:15.55px;color:#ffffff;transform:scaleX(0.8809)">Styles</div><div class="t" style="left:1357.30px;top:89.00px;font-size:15.55px;color:#ffffff;transform:scaleX(0.9182)">Insert</div><div class="t" style="left:1407.40px;top:89.00px;font-size:15.55px;color:#ffffff;transform:scaleX(0.9656)">Delete</div><div class="t" style="left:1460.70px;top:87.00px;font-size:15.55px;color:#ffffff;transform:scaleX(0.9399)">Format</div><div class="t" style="left:1560.50px;top:46.11px;font-size:15.26px;color:#ffffff;transform:scaleX(0.9544)">AutoSum</div><div class="t" style="left:1560.50px;top:77.00px;font-size:15.26px;color:#ffffff;transform:scaleX(0.8976)">Fill</div><div class="t" style="left:1560.50px;top:110.00px;font-size:15.26px;color:#ffffff;transform:scaleX(0.9020)">Clear</div><div class="t" style="left:1670.50px;top:87.71px;font-size:15.26px;color:#ffffff;transform:scaleX(1.0017)">Sort &amp;</div><div class="t" style="left:1668.60px;top:107.50px;font-size:15.26px;color:#ffffff;transform:scaleX(0.9464)">Filter</div><div class="t" style="left:1728.40px;top:87.71px;font-size:15.26px;color:#ffffff;transform:scaleX(0.9840)">Find &amp;</div><div class="t" style="left:1723.60px;top:107.50px;font-size:15.26px;color:#ffffff;transform:scaleX(0.9216)">Select</div><div class="t" style="left:1803.20px;top:87.00px;font-size:15.26px;color:#ffffff;transform:scaleX(0.9974)">Add-ins</div><div class="t" style="left:17.50px;top:174.70px;font-size:17.01px;color:#ffffff;transform:scaleX(0.9047)">F13</div><div class="t" style="left:60.28px;top:210.01px;font-size:17.15px;color:#ffffff;transform:scaleX(1.0000)">A</div><div class="t" style="left:176.78px;top:210.01px;font-size:17.15px;color:#ffffff;transform:scaleX(1.0000)">B</div><div class="t" style="left:335.80px;top:210.01px;font-size:17.15px;color:#ffffff;transform:scaleX(1.0000)">C</div><div class="t" style="left:442.30px;top:210.01px;font-size:17.15px;color:#ffffff;transform:scaleX(1.0000)">D</div><div class="t" style="left:548.28px;top:210.01px;font-size:17.15px;color:#ffffff;transform:scaleX(1.0000)">E</div><div class="t" style="left:663.27px;top:210.01px;font-size:17.15px;color:#ffffff;transform:scaleX(1.0000)">F</div><div class="t" style="left:741.83px;top:210.01px;font-size:17.15px;color:#ffffff;transform:scaleX(1.0000)">G</div><div class="t" style="left:822.30px;top:210.01px;font-size:17.15px;color:#ffffff;transform:scaleX(1.0000)">H</div><div class="t" style="left:906.12px;top:210.01px;font-size:17.15px;color:#ffffff;transform:scaleX(1.0000)">I</div><div class="t" style="left:984.21px;top:210.01px;font-size:17.15px;color:#ffffff;transform:scaleX(1.0000)">J</div><div class="t" style="left:1062.78px;top:210.01px;font-size:17.15px;color:#ffffff;transform:scaleX(1.0000)">K</div><div class="t" style="left:1143.74px;top:210.01px;font-size:17.15px;color:#ffffff;transform:scaleX(1.0000)">L</div><div class="t" style="left:1221.36px;top:210.01px;font-size:17.15px;color:#ffffff;transform:scaleX(1.0000)">M</div><div class="t" style="left:1302.30px;top:210.01px;font-size:17.15px;color:#ffffff;transform:scaleX(1.0000)">N</div><div class="t" style="left:1381.83px;top:210.01px;font-size:17.15px;color:#ffffff;transform:scaleX(1.0000)">O</div><div class="t" style="left:1462.78px;top:210.01px;font-size:17.15px;color:#ffffff;transform:scaleX(1.0000)">P</div><div class="t" style="left:1541.83px;top:210.01px;font-size:17.15px;color:#ffffff;transform:scaleX(1.0000)">Q</div><div class="t" style="left:1622.30px;top:210.01px;font-size:17.15px;color:#ffffff;transform:scaleX(1.0000)">R</div><div class="t" style="left:1702.78px;top:210.01px;font-size:17.15px;color:#ffffff;transform:scaleX(1.0000)">S</div><div class="t" style="left:1783.27px;top:210.01px;font-size:17.15px;color:#ffffff;transform:scaleX(1.0000)">T</div><div class="t" style="left:1862.30px;top:210.01px;font-size:17.15px;color:#ffffff;transform:scaleX(1.0000)">U</div><div class="t" style="left:12.32px;top:235.01px;font-size:16.86px;color:#ffffff;transform:scaleX(1.0000)">1</div><div class="t" style="left:12.32px;top:259.01px;font-size:16.86px;color:#ffffff;transform:scaleX(1.0000)">2</div><div class="t" style="left:12.32px;top:283.01px;font-size:16.86px;color:#ffffff;transform:scaleX(1.0000)">3</div><div class="t" style="left:12.32px;top:307.01px;font-size:16.86px;color:#ffffff;transform:scaleX(1.0000)">4</div><div class="t" style="left:12.32px;top:331.01px;font-size:16.86px;color:#ffffff;transform:scaleX(1.0000)">5</div><div class="t" style="left:12.32px;top:355.01px;font-size:16.86px;color:#ffffff;transform:scaleX(1.0000)">6</div><div class="t" style="left:12.32px;top:379.01px;font-size:16.86px;color:#ffffff;transform:scaleX(1.0000)">7</div><div class="t" style="left:12.32px;top:403.01px;font-size:16.86px;color:#ffffff;transform:scaleX(1.0000)">8</div><div class="t" style="left:12.32px;top:427.01px;font-size:16.86px;color:#ffffff;transform:scaleX(1.0000)">9</div><div class="t" style="left:7.62px;top:451.01px;font-size:16.86px;color:#ffffff;transform:scaleX(1.0000)">10</div><div class="t" style="left:8.25px;top:475.01px;font-size:16.86px;color:#ffffff;transform:scaleX(1.0000)">11</div><div class="t" style="left:7.62px;top:499.01px;font-size:16.86px;color:#ffffff;transform:scaleX(1.0000)">12</div><div class="t" style="left:7.62px;top:523.01px;font-size:16.86px;color:#ffffff;transform:scaleX(1.0000)">13</div><div class="t" style="left:7.62px;top:547.01px;font-size:16.86px;color:#ffffff;transform:scaleX(1.0000)">14</div><div class="t" style="left:7.62px;top:571.01px;font-size:16.86px;color:#ffffff;transform:scaleX(1.0000)">15</div><div class="t" style="left:7.62px;top:595.01px;font-size:16.86px;color:#ffffff;transform:scaleX(1.0000)">16</div><div class="t" style="left:7.62px;top:619.01px;font-size:16.86px;color:#ffffff;transform:scaleX(1.0000)">17</div><div class="t" style="left:7.62px;top:643.01px;font-size:16.86px;color:#ffffff;transform:scaleX(1.0000)">18</div><div class="t" style="left:7.62px;top:667.01px;font-size:16.86px;color:#ffffff;transform:scaleX(1.0000)">19</div><div class="t" style="left:7.62px;top:691.01px;font-size:16.86px;color:#ffffff;transform:scaleX(1.0000)">20</div><div class="t" style="left:7.62px;top:715.01px;font-size:16.86px;color:#ffffff;transform:scaleX(1.0000)">21</div><div class="t" style="left:7.62px;top:739.01px;font-size:16.86px;color:#ffffff;transform:scaleX(1.0000)">22</div><div class="t" style="left:7.62px;top:763.01px;font-size:16.86px;color:#ffffff;transform:scaleX(1.0000)">23</div><div class="t" style="left:7.62px;top:787.01px;font-size:16.86px;color:#ffffff;transform:scaleX(1.0000)">24</div><div class="t" style="left:7.62px;top:811.01px;font-size:16.86px;color:#ffffff;transform:scaleX(1.0000)">25</div><div class="t" style="left:7.62px;top:835.01px;font-size:16.86px;color:#ffffff;transform:scaleX(1.0000)">26</div><div class="t" style="left:7.62px;top:859.01px;font-size:16.86px;color:#ffffff;transform:scaleX(1.0000)">27</div><div class="t" style="left:7.62px;top:883.01px;font-size:16.86px;color:#ffffff;height:5.99px;overflow:hidden;transform:scaleX(1.0000)">28</div><div class="t" style="left:36.80px;top:234.70px;font-size:16.72px;color:#000000;transform:scaleX(0.9224)">Asset Id</div><div class="t" style="left:102.00px;top:234.70px;font-size:16.72px;color:#000000;transform:scaleX(0.9434)">Asset Name</div><div class="t" style="left:270.30px;top:234.70px;font-size:16.72px;color:#000000;transform:scaleX(0.9374)">User</div><div class="t" style="left:421.50px;top:234.70px;font-size:16.72px;color:#000000;transform:scaleX(0.9162)">Store</div><div class="t" style="left:483.30px;top:234.70px;font-size:16.72px;color:#000000;transform:scaleX(0.9439)">Photo of Equipment</div><div class="t" style="left:151.70px;top:897.61px;font-size:17.88px;color:#1a1a1a;transform:scaleX(0.9862)">Kitchen Asset Table_upload_temp</div><div class="t" style="left:247.70px;top:93.00px;font-size:18.90px;color:#d6d6d6;font-weight:bold;transform:scaleX(0.6959)">B</div>
</body></html>
